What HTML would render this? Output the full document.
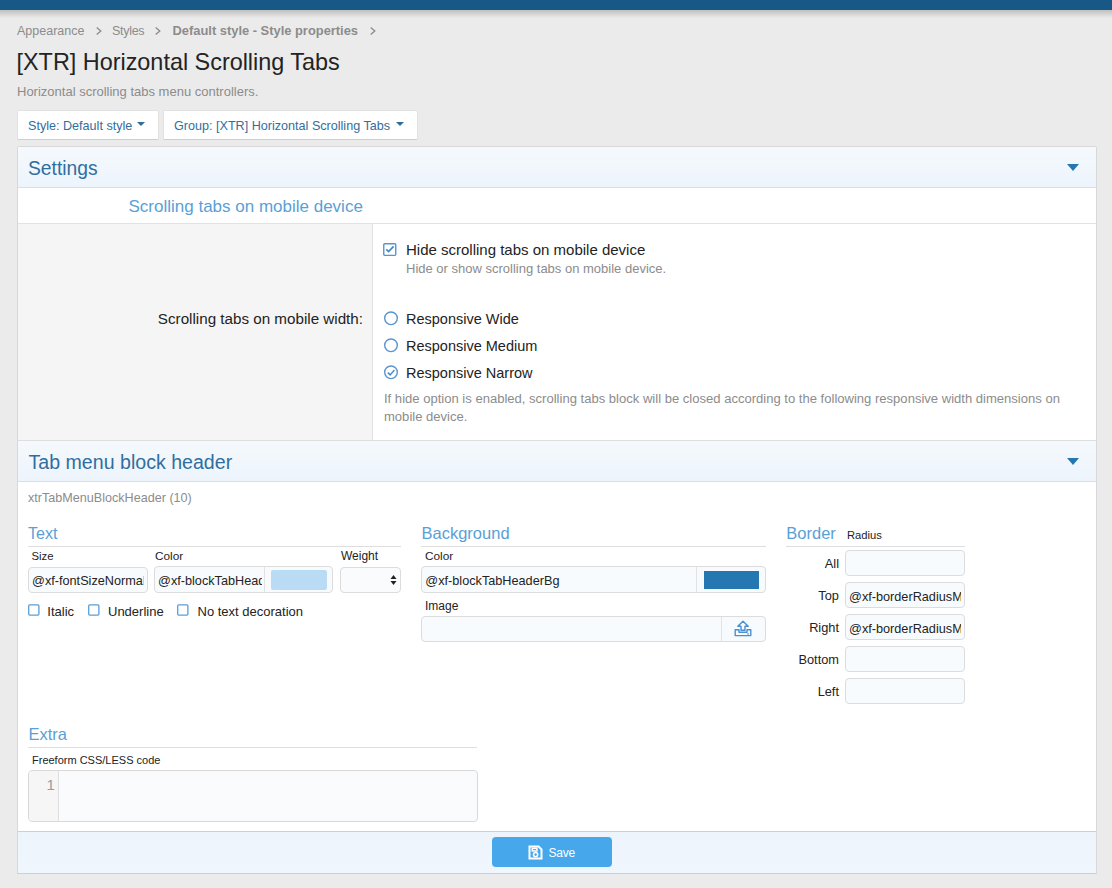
<!DOCTYPE html>
<html><head><meta charset="utf-8"><style>
html,body{margin:0;padding:0;}
body{width:1112px;height:888px;position:relative;overflow:hidden;background:#ebebeb;font-family:"Liberation Sans", sans-serif;}
</style></head><body>
<div style="position:absolute;left:0px;top:0px;width:1112px;height:10px;background:#185886;"></div>
<div style="position:absolute;left:0px;top:10px;width:1112px;height:8px;background:linear-gradient(to bottom, rgba(0,0,0,0.19), rgba(0,0,0,0));"></div>
<div style="position:absolute;left:17px;top:25.00px;font-size:12.5px;line-height:12.5px;color:#8c8c8c;font-weight:400;white-space:nowrap;">Appearance</div>
<svg style="position:absolute;left:96px;top:27px" width="6" height="8" viewBox="0 0 6 8"><path d="M0.7 0.6 L4.8 4 L0.7 7.4" fill="none" stroke="#8c8c8c" stroke-width="1.3"/></svg>
<div style="position:absolute;left:112px;top:25.00px;font-size:12.5px;line-height:12.5px;color:#8c8c8c;font-weight:400;white-space:nowrap;letter-spacing:-0.3px;">Styles</div>
<svg style="position:absolute;left:155px;top:27px" width="6" height="8" viewBox="0 0 6 8"><path d="M0.7 0.6 L4.8 4 L0.7 7.4" fill="none" stroke="#8c8c8c" stroke-width="1.3"/></svg>
<div style="position:absolute;left:172.5px;top:25.00px;font-size:12.9px;line-height:12.9px;color:#8c8c8c;font-weight:700;white-space:nowrap;">Default style - Style properties</div>
<svg style="position:absolute;left:370px;top:27px" width="6" height="8" viewBox="0 0 6 8"><path d="M0.7 0.6 L4.8 4 L0.7 7.4" fill="none" stroke="#8c8c8c" stroke-width="1.3"/></svg>
<div style="position:absolute;left:16.5px;top:51.00px;font-size:23.4px;line-height:23.4px;color:#232323;font-weight:400;white-space:nowrap;">[XTR] Horizontal Scrolling Tabs</div>
<div style="position:absolute;left:17px;top:84.50px;font-size:13px;line-height:13px;color:#8c8c8c;font-weight:400;white-space:nowrap;">Horizontal scrolling tabs menu controllers.</div>
<div style="position:absolute;left:17px;top:110px;width:142px;height:30px;background:#fff;border:1px solid #e2e2e2;border-bottom-color:#cdcdcd;border-radius:2px;box-sizing:border-box;"></div>
<div style="position:absolute;left:28px;top:119.50px;font-size:12.6px;line-height:12.6px;color:#316ea0;font-weight:400;white-space:nowrap;">Style: Default style</div>
<div style="position:absolute;left:137px;top:122px;width:0;height:0;border-left:4px solid transparent;border-right:4px solid transparent;border-top:4px solid #2d6b9a;"></div>
<div style="position:absolute;left:163px;top:110px;width:255px;height:30px;background:#fff;border:1px solid #e2e2e2;border-bottom-color:#cdcdcd;border-radius:2px;box-sizing:border-box;"></div>
<div style="position:absolute;left:174px;top:119.50px;font-size:12.6px;line-height:12.6px;color:#316ea0;font-weight:400;white-space:nowrap;">Group: [XTR] Horizontal Scrolling Tabs</div>
<div style="position:absolute;left:396px;top:122px;width:0;height:0;border-left:4px solid transparent;border-right:4px solid transparent;border-top:4px solid #2d6b9a;"></div>
<div style="position:absolute;left:17px;top:146px;width:1080px;height:728px;background:#fff;border:1px solid #d8d8d8;box-sizing:border-box;border-radius:2px;"></div>
<div style="position:absolute;left:18px;top:147px;width:1078px;height:40px;background:linear-gradient(to bottom,#f5f9fd,#edf4fc);"></div>
<div style="position:absolute;left:18px;top:187px;width:1078px;height:1px;background:#dedede;"></div>
<div style="position:absolute;left:28px;top:159.00px;font-size:19.3px;line-height:19.3px;color:#316ea0;font-weight:400;white-space:nowrap;">Settings</div>
<div style="position:absolute;left:1067px;top:164px;width:0;height:0;border-left:6px solid transparent;border-right:6px solid transparent;border-top:7px solid #2577b1;"></div>
<div style="position:absolute;left:128.5px;top:198.00px;font-size:17px;line-height:17px;color:#5a9fd6;font-weight:400;white-space:nowrap;">Scrolling tabs on mobile device</div>
<div style="position:absolute;left:18px;top:223px;width:1078px;height:1px;background:#e2e2e2;"></div>
<div style="position:absolute;left:18px;top:224px;width:355px;height:216px;background:#f5f5f5;"></div>
<div style="position:absolute;left:372px;top:224px;width:1px;height:216px;background:#e2e2e2;"></div>
<div style="position:absolute;left:18px;top:440px;width:1078px;height:1px;background:#dedede;"></div>
<div style="position:absolute;right:749px;top:311.00px;font-size:15.2px;line-height:15.2px;color:#232323;font-weight:400;white-space:nowrap;">Scrolling tabs on mobile width:</div>
<svg style="position:absolute;left:383px;top:243px" width="14" height="13" viewBox="0 0 14 13"><rect x="0.75" y="0.75" width="12" height="11.6" rx="1" fill="#fff" stroke="#5a95cf" stroke-width="1.4"/><path d="M3.3 6.4 L5.6 8.6 L10.6 3.4" fill="none" stroke="#3f86c8" stroke-width="1.6"/></svg>
<div style="position:absolute;left:406px;top:241.50px;font-size:15px;line-height:15px;color:#232323;font-weight:400;white-space:nowrap;">Hide scrolling tabs on mobile device</div>
<div style="position:absolute;left:406px;top:262.00px;font-size:13px;line-height:13px;color:#8c8c8c;font-weight:400;white-space:nowrap;">Hide or show scrolling tabs on mobile device.</div>
<svg style="position:absolute;left:384px;top:311px" width="14" height="15" viewBox="0 0 14 15"><circle cx="7" cy="7.3" r="6.3" fill="#fff" stroke="#5a95cf" stroke-width="1.4"/></svg>
<div style="position:absolute;left:406px;top:312.00px;font-size:14.5px;line-height:14.5px;color:#232323;font-weight:400;white-space:nowrap;">Responsive Wide</div>
<svg style="position:absolute;left:384px;top:338px" width="14" height="15" viewBox="0 0 14 15"><circle cx="7" cy="7.3" r="6.3" fill="#fff" stroke="#5a95cf" stroke-width="1.4"/></svg>
<div style="position:absolute;left:406px;top:338.50px;font-size:14.5px;line-height:14.5px;color:#232323;font-weight:400;white-space:nowrap;">Responsive Medium</div>
<svg style="position:absolute;left:384px;top:365px" width="14" height="15" viewBox="0 0 14 15"><circle cx="7" cy="7.3" r="6.3" fill="#fff" stroke="#5a95cf" stroke-width="1.4"/><path d="M3.8 7.6 L6.2 9.9 L10.4 5.1" fill="none" stroke="#4a8dcc" stroke-width="1.5"/></svg>
<div style="position:absolute;left:406px;top:365.50px;font-size:14.5px;line-height:14.5px;color:#232323;font-weight:400;white-space:nowrap;">Responsive Narrow</div>
<div style="position:absolute;left:384px;top:392.00px;font-size:13.05px;line-height:13.05px;color:#8c8c8c;font-weight:400;white-space:nowrap;">If hide option is enabled, scrolling tabs block will be closed according to the following responsive width dimensions on</div>
<div style="position:absolute;left:384px;top:410.00px;font-size:13.05px;line-height:13.05px;color:#8c8c8c;font-weight:400;white-space:nowrap;">mobile device.</div>
<div style="position:absolute;left:18px;top:441px;width:1078px;height:40px;background:linear-gradient(to bottom,#f5f9fd,#edf4fc);"></div>
<div style="position:absolute;left:18px;top:481px;width:1078px;height:1px;background:#dedede;"></div>
<div style="position:absolute;left:28.5px;top:453.00px;font-size:19.6px;line-height:19.6px;color:#316ea0;font-weight:400;white-space:nowrap;">Tab menu block header</div>
<div style="position:absolute;left:1067px;top:458px;width:0;height:0;border-left:6px solid transparent;border-right:6px solid transparent;border-top:7px solid #2577b1;"></div>
<div style="position:absolute;left:28px;top:491.50px;font-size:12.6px;line-height:12.6px;color:#8c8c8c;font-weight:400;white-space:nowrap;">xtrTabMenuBlockHeader (10)</div>
<div style="position:absolute;left:28px;top:526.00px;font-size:16px;line-height:16px;color:#5a9fd6;font-weight:400;white-space:nowrap;">Text</div>
<div style="position:absolute;left:28px;top:546px;width:373px;height:1px;background:#dedede;"></div>
<div style="position:absolute;left:31.5px;top:550.50px;font-size:11.3px;line-height:11.3px;color:#232323;font-weight:400;white-space:nowrap;">Size</div>
<div style="position:absolute;left:155px;top:550.50px;font-size:11.8px;line-height:11.8px;color:#232323;font-weight:400;white-space:nowrap;">Color</div>
<div style="position:absolute;left:341px;top:549.50px;font-size:12px;line-height:12px;color:#232323;font-weight:400;white-space:nowrap;">Weight</div>
<div style="position:absolute;left:28px;top:567px;width:120px;height:26px;background:#f8fbfd;border:1px solid #dcdcdc;border-radius:4px;box-sizing:border-box;"></div>
<div style="position:absolute;left:32px;top:567px;width:112px;height:26px;overflow:hidden;"><div style="position:absolute;left:0;top:8.00px;font-size:12.7px;line-height:12.7px;color:#232323;white-space:nowrap">@xf-fontSizeNormal</div></div>
<div style="position:absolute;left:154px;top:566px;width:179px;height:27px;background:#f8fbfd;border:1px solid #dcdcdc;border-radius:4px;box-sizing:border-box;"></div>
<div style="position:absolute;left:264px;top:567px;width:1px;height:25px;background:#e2e2e2;"></div>
<div style="position:absolute;left:271px;top:570px;width:56px;height:20px;background:#b9dcf4;border-radius:2px;"></div>
<div style="position:absolute;left:158px;top:567px;width:104px;height:26px;overflow:hidden;"><div style="position:absolute;left:0;top:8.00px;font-size:12.7px;line-height:12.7px;color:#232323;white-space:nowrap">@xf-blockTabHeaderColor</div></div>
<div style="position:absolute;left:340px;top:567px;width:61px;height:26px;background:#f9fbfd;border:1px solid #dcdcdc;border-radius:4px;box-sizing:border-box;"></div>
<svg style="position:absolute;left:390px;top:575px" width="7" height="11" viewBox="0 0 7 11"><path d="M3.5 0 L6.5 4 L0.5 4 Z M3.5 10 L6.5 6 L0.5 6 Z" fill="#222"/></svg>
<svg style="position:absolute;left:28px;top:604px" width="12" height="12" viewBox="0 0 12 12"><rect x="0.7" y="0.9" width="10.2" height="10.2" rx="1" fill="#fff" stroke="#5a9fd6" stroke-width="1.3"/></svg>
<div style="position:absolute;left:47.3px;top:604.50px;font-size:13px;line-height:13px;color:#232323;font-weight:400;white-space:nowrap;">Italic</div>
<svg style="position:absolute;left:88px;top:604px" width="12" height="12" viewBox="0 0 12 12"><rect x="0.7" y="0.9" width="10.2" height="10.2" rx="1" fill="#fff" stroke="#5a9fd6" stroke-width="1.3"/></svg>
<div style="position:absolute;left:108px;top:604.50px;font-size:13px;line-height:13px;color:#232323;font-weight:400;white-space:nowrap;">Underline</div>
<svg style="position:absolute;left:177px;top:604px" width="12" height="12" viewBox="0 0 12 12"><rect x="0.7" y="0.9" width="10.2" height="10.2" rx="1" fill="#fff" stroke="#5a9fd6" stroke-width="1.3"/></svg>
<div style="position:absolute;left:197.5px;top:604.50px;font-size:13px;line-height:13px;color:#232323;font-weight:400;white-space:nowrap;">No text decoration</div>
<div style="position:absolute;left:421.5px;top:524.60px;font-size:16.5px;line-height:16.5px;color:#5a9fd6;font-weight:400;white-space:nowrap;">Background</div>
<div style="position:absolute;left:421px;top:546px;width:345px;height:1px;background:#dedede;"></div>
<div style="position:absolute;left:425px;top:550.50px;font-size:11.8px;line-height:11.8px;color:#232323;font-weight:400;white-space:nowrap;">Color</div>
<div style="position:absolute;left:421px;top:566px;width:345px;height:27px;background:#f8fbfd;border:1px solid #dcdcdc;border-radius:4px;box-sizing:border-box;"></div>
<div style="position:absolute;left:696px;top:567px;width:1px;height:25px;background:#e2e2e2;"></div>
<div style="position:absolute;left:704px;top:571px;width:55px;height:18px;background:#2577b1;"></div>
<div style="position:absolute;left:425.3px;top:575.00px;font-size:12.7px;line-height:12.7px;color:#232323;font-weight:400;white-space:nowrap;">@xf-blockTabHeaderBg</div>
<div style="position:absolute;left:425px;top:599.80px;font-size:12px;line-height:12px;color:#232323;font-weight:400;white-space:nowrap;">Image</div>
<div style="position:absolute;left:421px;top:616px;width:345px;height:26px;background:#f8fbfd;border:1px solid #dcdcdc;border-radius:4px;box-sizing:border-box;"></div>
<div style="position:absolute;left:721px;top:617px;width:1px;height:24px;background:#e2e2e2;"></div>
<svg style="position:absolute;left:734px;top:620px" width="18" height="17" viewBox="0 0 18 17"><path d="M9 1.2 L14.2 6.2 L11 6.2 L11 10.3 L7 10.3 L7 6.2 L3.8 6.2 Z" fill="none" stroke="#4a90d0" stroke-width="1.4" stroke-linejoin="round"/><path d="M1.2 9.8 L5 9.8 L5 12.2 L13 12.2 L13 9.8 L16.8 9.8 L16.8 15.6 L1.2 15.6 Z" fill="none" stroke="#4a90d0" stroke-width="1.4" stroke-linejoin="round"/><rect x="13" y="13.4" width="2" height="1" fill="#4a90d0"/></svg>
<div style="position:absolute;left:786.3px;top:524.70px;font-size:16.5px;line-height:16.5px;color:#5a9fd6;font-weight:400;white-space:nowrap;">Border</div>
<div style="position:absolute;left:847px;top:529.90px;font-size:11.2px;line-height:11.2px;color:#232323;font-weight:400;white-space:nowrap;">Radius</div>
<div style="position:absolute;left:786px;top:546px;width:179px;height:1px;background:#dedede;"></div>
<div style="position:absolute;left:845px;top:550px;width:120px;height:26px;background:#f8fbfd;border:1px solid #dcdcdc;border-radius:4px;box-sizing:border-box;"></div>
<div style="position:absolute;right:273px;top:558.30px;font-size:12.8px;line-height:12.8px;color:#232323;font-weight:400;white-space:nowrap;">All</div>
<div style="position:absolute;left:845px;top:582px;width:120px;height:26px;background:#f8fbfd;border:1px solid #dcdcdc;border-radius:4px;box-sizing:border-box;"></div>
<div style="position:absolute;right:273px;top:590.30px;font-size:12.8px;line-height:12.8px;color:#232323;font-weight:400;white-space:nowrap;">Top</div>
<div style="position:absolute;left:849px;top:582px;width:112px;height:26px;overflow:hidden;"><div style="position:absolute;left:0;top:9.00px;font-size:12.7px;line-height:12.7px;color:#232323;white-space:nowrap">@xf-borderRadiusMedium</div></div>
<div style="position:absolute;left:845px;top:614px;width:120px;height:26px;background:#f8fbfd;border:1px solid #dcdcdc;border-radius:4px;box-sizing:border-box;"></div>
<div style="position:absolute;right:273px;top:622.30px;font-size:12.8px;line-height:12.8px;color:#232323;font-weight:400;white-space:nowrap;">Right</div>
<div style="position:absolute;left:849px;top:614px;width:112px;height:26px;overflow:hidden;"><div style="position:absolute;left:0;top:9.00px;font-size:12.7px;line-height:12.7px;color:#232323;white-space:nowrap">@xf-borderRadiusMedium</div></div>
<div style="position:absolute;left:845px;top:646px;width:120px;height:26px;background:#f8fbfd;border:1px solid #dcdcdc;border-radius:4px;box-sizing:border-box;"></div>
<div style="position:absolute;right:273px;top:654.30px;font-size:12.8px;line-height:12.8px;color:#232323;font-weight:400;white-space:nowrap;">Bottom</div>
<div style="position:absolute;left:845px;top:678px;width:120px;height:26px;background:#f8fbfd;border:1px solid #dcdcdc;border-radius:4px;box-sizing:border-box;"></div>
<div style="position:absolute;right:273px;top:686.30px;font-size:12.8px;line-height:12.8px;color:#232323;font-weight:400;white-space:nowrap;">Left</div>
<div style="position:absolute;left:28.4px;top:725.70px;font-size:16.5px;line-height:16.5px;color:#5a9fd6;font-weight:400;white-space:nowrap;">Extra</div>
<div style="position:absolute;left:28px;top:747px;width:449px;height:1px;background:#dedede;"></div>
<div style="position:absolute;left:32px;top:754.70px;font-size:11px;line-height:11px;color:#232323;font-weight:400;white-space:nowrap;">Freeform CSS/LESS code</div>
<div style="position:absolute;left:28px;top:770px;width:450px;height:52px;background:#f9fbfd;border:1px solid #d8d8d8;border-radius:4px;box-sizing:border-box;overflow:hidden;"></div>
<div style="position:absolute;left:29px;top:771px;width:29px;height:50px;background:#f6f6f6;border-right:1px solid #dedede;border-radius:3px 0 0 3px;"></div>
<div style="position:absolute;left:46.5px;top:777.00px;font-size:15px;line-height:15px;color:#9a9a9a;font-weight:400;white-space:nowrap;font-family:"Liberation Mono",monospace;">1</div>
<div style="position:absolute;left:18px;top:831px;width:1078px;height:1px;background:#cfcfcf;"></div>
<div style="position:absolute;left:18px;top:832px;width:1078px;height:41px;background:linear-gradient(to bottom,#edf4fc,#eff6fd);"></div>
<div style="position:absolute;left:17px;top:873px;width:1080px;height:1px;background:#cfcfcf;"></div>
<div style="position:absolute;left:492px;top:837px;width:120px;height:30px;background:#47a7eb;border-radius:4px;"></div>
<svg style="position:absolute;left:528px;top:845px" width="15" height="15" viewBox="0 0 15 15"><path d="M1.5 1.5 H10.6 L13.5 4.4 V13.5 H1.5 Z" fill="none" stroke="#fff" stroke-width="2"/><rect x="4.3" y="3.3" width="4.6" height="2.6" fill="none" stroke="#fff" stroke-width="1.5"/><circle cx="7.6" cy="9.6" r="2.1" fill="none" stroke="#fff" stroke-width="1.6"/></svg>
<div style="position:absolute;left:548.5px;top:847.00px;font-size:12px;line-height:12px;color:#ffffff;font-weight:400;white-space:nowrap;letter-spacing:-0.2px;">Save</div>
</body></html>
